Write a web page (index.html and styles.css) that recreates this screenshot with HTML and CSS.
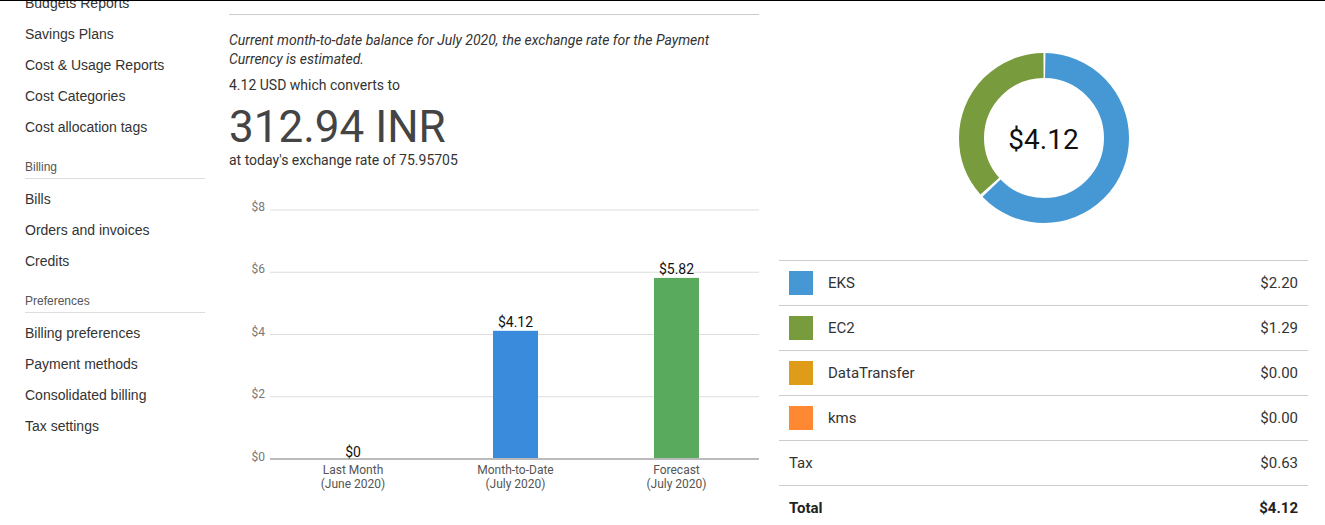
FILE: index.html
```html
<!DOCTYPE html>
<html lang="en">
<head>
    <meta charset="UTF-8">
    <meta name="viewport" content="width=device-width, initial-scale=1.0">
    <title>Bills - Month-to-date summary</title>
    <link rel="stylesheet" href="styles.css">
</head>
<body>
    <div class="viewport">
        <div class="page">
            <nav class="sidebar">
                <a class="nav-item" href="#">Budgets Reports</a>
                <a class="nav-item" href="#">Savings Plans</a>
                <a class="nav-item" href="#">Cost &amp; Usage Reports</a>
                <a class="nav-item" href="#">Cost Categories</a>
                <a class="nav-item" href="#">Cost allocation tags</a>

                <div class="nav-head">Billing</div>
                <a class="nav-item" href="#">Bills</a>
                <a class="nav-item" href="#">Orders and invoices</a>
                <a class="nav-item" href="#">Credits</a>

                <div class="nav-head">Preferences</div>
                <a class="nav-item" href="#">Billing preferences</a>
                <a class="nav-item" href="#">Payment methods</a>
                <a class="nav-item" href="#">Consolidated billing</a>
                <a class="nav-item" href="#">Tax settings</a>
            </nav>

            <main class="summary">
                <div class="summary-head"></div>
                <p class="note">Current month-to-date balance for July 2020, the exchange rate for the Payment Currency is estimated.</p>
                <p class="converts">4.12 USD which converts to</p>
                <div class="amount">312.94 INR</div>
                <p class="rate">at today's exchange rate of 75.95705</p>

                <svg class="bar-chart" width="530" height="330" viewBox="0 0 530 330">
                    <!-- grid: $2 = 62.25px -->
                    <g class="grid">
                        <line x1="41" y1="40" x2="530" y2="40"/>
                        <line x1="41" y1="102.25" x2="530" y2="102.25"/>
                        <line x1="41" y1="164.5" x2="530" y2="164.5"/>
                        <line x1="41" y1="226.75" x2="530" y2="226.75"/>
                    </g>
                    <line class="axis" x1="41" y1="289" x2="530" y2="289"/>
                    <g class="y-labels">
                        <text x="36" y="41">$8</text>
                        <text x="36" y="103">$6</text>
                        <text x="36" y="165.5">$4</text>
                        <text x="36" y="228">$2</text>
                        <text x="36" y="290.5">$0</text>
                    </g>
                    <rect class="bar-mtd" x="264" y="160.8" width="45" height="127.2"/>
                    <rect class="bar-forecast" x="425" y="107.9" width="45" height="180.1"/>
                    <g class="values">
                        <text x="124" y="286.5">$0</text>
                        <text x="286.5" y="157">$4.12</text>
                        <text x="447.5" y="104">$5.82</text>
                    </g>
                    <g class="x-labels">
                        <text x="124" y="304">Last Month</text>
                        <text x="124" y="318">(June 2020)</text>
                        <text x="286.5" y="304">Month-to-Date</text>
                        <text x="286.5" y="318">(July 2020)</text>
                        <text x="447.5" y="304">Forecast</text>
                        <text x="447.5" y="318">(July 2020)</text>
                    </g>
                </svg>
            </main>

            <section class="breakdown">
                <div class="donut">
                    <svg width="170" height="170" viewBox="0 0 170 170">
                        <g transform="rotate(-90 85 85)">
                            <circle class="slice-eks" cx="85" cy="85" r="72.5" stroke-dasharray="284.7 170.8" stroke-dashoffset="-1.25"/>
                            <circle class="slice-ec2" cx="85" cy="85" r="72.5" stroke-dasharray="165.8 289.7" stroke-dashoffset="-288.5"/>
                        </g>
                    </svg>
                    <span class="donut-total">$4.12</span>
                </div>

                <div class="services">
                    <div class="service-row">
                        <span class="swatch eks"></span>
                        <span class="service-name">EKS</span>
                        <span class="service-cost">$2.20</span>
                    </div>
                    <div class="service-row">
                        <span class="swatch ec2"></span>
                        <span class="service-name">EC2</span>
                        <span class="service-cost">$1.29</span>
                    </div>
                    <div class="service-row">
                        <span class="swatch transfer"></span>
                        <span class="service-name">DataTransfer</span>
                        <span class="service-cost">$0.00</span>
                    </div>
                    <div class="service-row">
                        <span class="swatch kms"></span>
                        <span class="service-name">kms</span>
                        <span class="service-cost">$0.00</span>
                    </div>
                    <div class="service-row">
                        <span class="service-name plain">Tax</span>
                        <span class="service-cost">$0.63</span>
                    </div>
                    <div class="service-row total">
                        <span class="service-name plain">Total</span>
                        <span class="service-cost">$4.12</span>
                    </div>
                </div>
            </section>
        </div>
    </div>
</body>
</html>
```

FILE: styles.css
```css
body {
    margin: 0;
    background-color: #ffffff;
    font-family: Roboto, "Liberation Sans", sans-serif;
    color: #333;
}
.viewport {
    border-top: 1px solid #000;
    height: 524px;
    overflow: hidden;
}
/* page is scrolled down a little */
.page {
    display: flex;
    margin-top: -13px;
    padding: 0 17px 0 25px;
}

/* left navigation */
.sidebar {
    width: 180px;
    flex: none;
    display: flex;
    flex-direction: column;
    font-family: "Liberation Sans", Arial, sans-serif;
}
.nav-item {
    font-size: 14px;
    line-height: 31px;
    color: #333;
    text-decoration: none;
}
.nav-head {
    margin: 15px 0 5px;
    padding-bottom: 2px;
    border-bottom: 1px solid #ddd;
    font-size: 12px;
    line-height: 18px;
    color: #555;
}

/* middle column */
.summary {
    width: 530px;
    flex: none;
    margin-left: 24px;
}
.summary-head {
    height: 26px;
    border-bottom: 1px solid #ccc;
}
.summary p {
    margin: 0;
    font-size: 14px;
    line-height: 20px;
}
.note {
    margin-top: 16px !important;
    font-style: italic;
    line-height: 19px !important;
}
.converts {
    margin-top: 6px !important;
}
.amount {
    margin-top: 10px;
    font-size: 44px;
    line-height: 44px;
    color: #444;
}
.rate {
    margin-top: 1px !important;
}
.bar-chart {
    display: block;
}
.bar-chart .grid line {
    stroke: #ddd;
    stroke-width: 1;
}
.bar-chart .axis {
    stroke: #bbb;
    stroke-width: 2;
}
.bar-chart text {
    font-family: Roboto, sans-serif;
}
.y-labels text {
    font-size: 12px;
    fill: #777;
    text-anchor: end;
}
.values text {
    font-size: 14px;
    fill: #111;
    text-anchor: middle;
}
.x-labels text {
    font-size: 12px;
    fill: #555;
    text-anchor: middle;
}
.bar-mtd {
    fill: #3a8bdb;
}
.bar-forecast {
    fill: #59aa5c;
}

/* right column */
.breakdown {
    flex: 1;
    margin-left: 20px;
    padding-top: 65px;
}
.donut {
    display: grid;
    place-items: center;
    margin-bottom: 37px;
}
.donut svg,
.donut-total {
    grid-area: 1 / 1;
}
.donut circle {
    fill: none;
    stroke-width: 25;
}
.slice-eks {
    stroke: #4598d3;
}
.slice-ec2 {
    stroke: #789b3d;
}
.donut-total {
    padding-top: 3px;
    font-size: 28px;
    color: #111;
}
.service-row {
    display: flex;
    align-items: center;
    height: 45px;
    box-sizing: border-box;
    padding: 0 10px;
    border-top: 1px solid #ccc;
    font-size: 15px;
    color: #333;
}
.swatch {
    width: 24px;
    height: 24px;
    margin-right: 15px;
}
.swatch.eks {
    background-color: #4598d3;
}
.swatch.ec2 {
    background-color: #789b3d;
}
.swatch.transfer {
    background-color: #df9c19;
}
.swatch.kms {
    background-color: #ff8833;
}
.service-name {
    flex: 1;
}
.total {
    font-weight: bold;
    color: #222;
}
```
